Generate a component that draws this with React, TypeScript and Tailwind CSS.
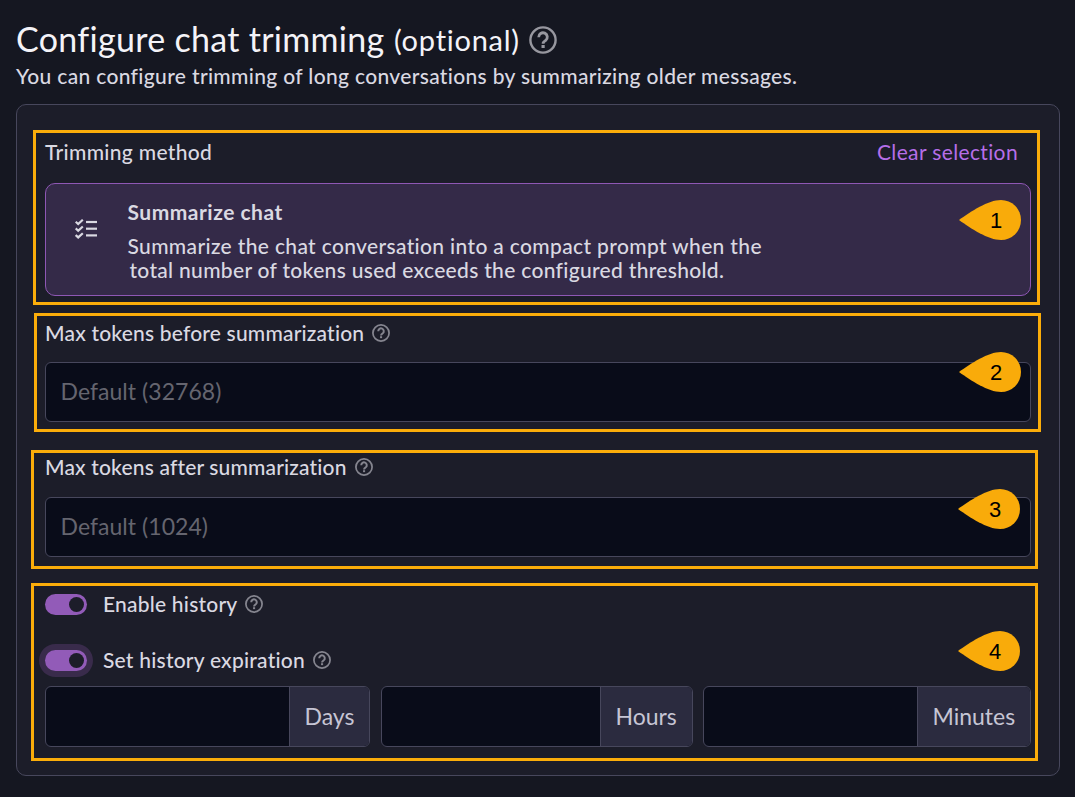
import type { ReactNode } from 'react';

function HelpIcon({ className, strokeWidth = 2.4 }: { className: string; strokeWidth?: number }) {
  return (
    <svg viewBox="0 0 28 28" className={className} fill="none" stroke="currentColor" strokeWidth={strokeWidth}>
      <circle cx="14" cy="14" r="12.6" />
      <path d="M9.7 11.2a4.3 4.3 0 1 1 7 3.2c-1.5 1.1-2.6 1.7-2.6 3.4" strokeWidth={strokeWidth + 0.4} />
      <path d="M12.5 20.5h3.2" strokeWidth="3" />
    </svg>
  );
}

function ChecklistIcon() {
  return (
    <svg viewBox="0 0 22 20" className="h-5 w-[22px] shrink-0" fill="none" stroke="currentColor" strokeWidth="2.2">
      {[0, 6.7, 13.4].map((y) => (
        <g key={y} transform={`translate(0 ${y})`}>
          <path d="M.7 2.7 3.2 5 7.8.8" />
          <path d="M11 3H22" />
        </g>
      ))}
    </svg>
  );
}

function Toggle({ focused = false }: { focused?: boolean }) {
  return (
    <button
      className={`flex h-[21px] w-[42px] shrink-0 items-center justify-end rounded-full bg-[#925bb8] pr-[3px] ${
        focused ? 'ring-[6px] ring-[#392b4b]' : ''
      }`}
    >
      <span className="size-[15px] rounded-full bg-[#1c1d29]" />
    </button>
  );
}

function Label({ children, help = true, className = '' }: { children: ReactNode; help?: boolean; className?: string }) {
  return (
    <div className={`flex h-6 items-center gap-2 text-[21px] leading-6 font-medium ${className}`}>
      <span className="-mt-px">{children}</span>
      {help && <HelpIcon className="size-[18px] text-[#85858f]" strokeWidth={2.7} />}
    </div>
  );
}

function Field({ placeholder, className }: { placeholder: string; className: string }) {
  return (
    <div
      className={`flex h-[60px] items-center rounded-md border border-[#47475c] bg-[#090c19] pb-[2px] pl-[14.5px] text-[23px] tracking-[0.05px] text-[#65656f] ${className}`}
    >
      {placeholder}
    </div>
  );
}

function Unit({ label, className, unitClass }: { label: string; className: string; unitClass: string }) {
  return (
    <div className={`flex h-[61px] overflow-hidden rounded-md border border-[#47475c] bg-[#090c19] ${className}`}>
      <div className="flex-1" />
      <div className={`flex items-center border-l border-[#47475c] bg-[#2b2b3f] pb-px pl-[14.5px] text-[23px] text-[#c6c5d4] ${unitClass}`}>
        {label}
      </div>
    </div>
  );
}

function Pin({ n, className }: { n: number; className: string }) {
  return (
    <div className={`absolute h-10 w-[62px] ${className}`}>
      <svg viewBox="0 0 62 40" className="absolute size-full" fill="#f9ab0a">
        <path d="M0 20C12 11.5 29 0 42 0a20 20 0 0 1 0 40C29 40 12 28.5 0 20Z" />
      </svg>
      <span className="relative flex h-10 w-[74px] items-center justify-center font-['Liberation_Sans',sans-serif] text-[22px] text-black">
        {n}
      </span>
    </div>
  );
}

export default function App() {
  return (
    <div className="relative h-[797px] w-[1075px] overflow-hidden bg-[#151721] px-4 pt-5 font-['Lato',sans-serif] whitespace-nowrap text-[#dad9e2]">
      <header>
        <h1 className="flex h-10 items-center text-[#f4f3f8]">
          <span className="-mt-[3px] w-[378px] text-[34px] tracking-[0.3px]">Configure chat trimming</span>
          <span className="w-[135px] text-[29px] tracking-[0.75px]">(optional)</span>
          <HelpIcon className="size-7 text-[#97979f]" />
        </h1>
        <p className="mt-1 h-6 text-[21px] leading-6 font-medium tracking-[0.34px]">
          You can configure trimming of long conversations by summarizing older messages.
        </p>
      </header>

      <main className="mt-4 h-[672px] w-[1044px] rounded-[10px] border border-[#47475c] bg-[#1c1d29] px-7 pt-[35px]">
        <div className="flex items-center justify-between pr-[13px]">
          <Label help={false} className="tracking-[0.32px]">Trimming method</Label>
          <a className="-mt-px text-[21px] leading-6 tracking-[0.37px] text-[#b66ee8]">Clear selection</a>
        </div>

        <div className="mt-[19px] flex h-[113px] rounded-[10px] border border-[#8e57b4] bg-[#342a48] pl-[29px]">
          <div className="flex w-[53px] items-center pb-[21px]">
            <ChecklistIcon />
          </div>
          <div className="-ml-[0.5px] pt-[16px] text-[21px] leading-6">
            <div className="font-bold tracking-[0.5px]">Summarize chat</div>
            <p className="mt-[10px] font-medium tracking-[0.35px]">
              Summarize the chat conversation into a compact prompt when the
            </p>
            <p className="pl-[2px] font-medium tracking-[0.31px]">
              total number of tokens used exceeds the configured threshold.
            </p>
          </div>
        </div>

        <Label className="mt-[25px] tracking-[0.19px]">Max tokens before summarization</Label>
        <Field placeholder="Default (32768)" className="mt-[17px]" />

        <Label className="mt-[33px] tracking-[0.16px]">Max tokens after summarization</Label>
        <Field placeholder="Default (1024)" className="mt-[18px]" />

        <div className="mt-[35px] flex h-6 items-center gap-4">
          <Toggle />
          <Label className="tracking-[0.22px]">Enable history</Label>
        </div>
        <div className="mt-8 flex h-6 items-center gap-4">
          <Toggle focused />
          <Label className="tracking-[0.23px]">Set history expiration</Label>
        </div>

        <div className="mt-[14px] flex">
          <Unit label="Days" className="w-[325px]" unitClass="w-[80px]" />
          <Unit label="Hours" className="ml-[11px] w-[312px]" unitClass="w-[92px]" />
          <Unit label="Minutes" className="ml-[10px] w-[328px]" unitClass="w-[113px]" />
        </div>
      </main>

      <div className="absolute top-[130px] left-[33px] h-[175px] w-[1007px] border-[3px] border-[#fbad0a]" />
      <div className="absolute top-[313px] left-[34px] h-[119px] w-[1007px] border-[3px] border-[#fbad0a]" />
      <div className="absolute top-[450px] left-[31px] h-[119px] w-[1007px] border-[3px] border-[#fbad0a]" />
      <div className="absolute top-[583px] left-[31px] h-[178px] w-[1007px] border-[3px] border-[#fbad0a]" />
      <Pin n={1} className="top-[200px] left-[959px]" />
      <Pin n={2} className="top-[352px] left-[959px]" />
      <Pin n={3} className="top-[489px] left-[958px]" />
      <Pin n={4} className="top-[631px] left-[958px]" />
    </div>
  );
}
